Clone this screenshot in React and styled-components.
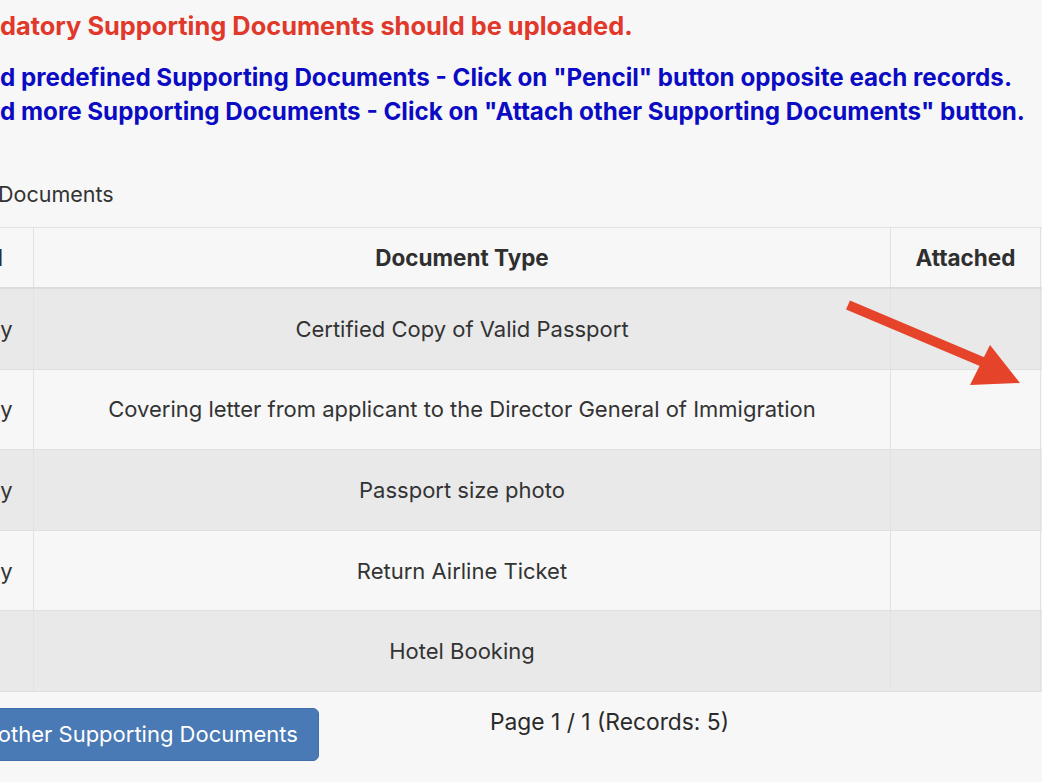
import React from "react";
import styled, { createGlobalStyle } from "styled-components";

const Global = createGlobalStyle`
  html, body {
    margin: 0;
    padding: 0;
    background: #f7f7f7;
    overflow: hidden;
  }
  body {
    font-family: Inter, "Open Sans", "Liberation Sans", sans-serif;
    color: #333;
  }
`;

const Page = styled.div`
  position: relative;
  width: 1042px;
  height: 782px;
  overflow: hidden;
`;

const Notes = styled.div`
  padding-top: 11px;
  display: flex;
  flex-direction: column;
`;

const Warning = styled.div`
  color: #e0392b;
  font-weight: 700;
  font-size: 25.4px;
  line-height: 30px;
  white-space: nowrap;
`;

const Steps = styled.div`
  margin-top: 20px;
  display: flex;
  flex-direction: column;
`;

const Step = styled.div`
  color: #0b0bc4;
  font-weight: 700;
  font-size: 24.2px;
  line-height: 34px;
  white-space: nowrap;
`;

const SectionTitle = styled.div`
  margin-top: 52px;
  margin-left: -2px;
  font-size: 21.5px;
  line-height: 26px;
  color: #333;
  white-space: nowrap;
`;

const TableWrap = styled.div`
  margin-top: 20px;
  margin-left: -121px;
`;

const Table = styled.table`
  border-collapse: collapse;
  table-layout: fixed;
  width: 1311px;
`;

const Col = styled.col`
  width: ${(p) => p.$w}px;
`;

const HeadCell = styled.th`
  height: 59px;
  padding: 0;
  font-size: 22.5px;
  font-weight: 700;
  color: #2f2f2f;
  text-align: center;
  white-space: nowrap;
  border: 1px solid #e2e2e2;
  border-bottom: 2px solid #dcdcdc;
  background: #f7f7f7;
`;

const Row = styled.tr`
  background: ${(p) => (p.$odd ? "#e9e9e9" : "#f7f7f7")};
`;

const Cell = styled.td`
  height: 79.6px;
  padding: 0;
  font-size: 22px;
  color: #333;
  text-align: center;
  white-space: nowrap;
  border-left: 1px solid #e2e2e2;
  border-right: 1px solid #e2e2e2;
  border-bottom: 1px solid #e0e0e0;
`;

const Footer = styled.div`
  margin-top: 16px;
  display: flex;
  align-items: flex-start;
`;

const AttachButton = styled.button`
  margin-left: -97px;
  height: 53px;
  padding: 0 20px 0 21px;
  background: #4a7ab5;
  color: #fff;
  border: 1px solid #3f6ea8;
  border-radius: 6px;
  font-family: Inter, "Open Sans", "Liberation Sans", sans-serif;
  font-size: 22px;
  white-space: nowrap;
`;

const Pager = styled.div`
  margin-left: 171px;
  margin-top: 1px;
  font-size: 22.8px;
  line-height: 26px;
  color: #2a2a2a;
  white-space: nowrap;
`;

const ArrowSvg = styled.svg`
  position: absolute;
  left: 840px;
  top: 295px;
  width: 190px;
  height: 100px;
`;

const rows = [
  { req: "Mandatory", doc: "Certified Copy of Valid Passport" },
  { req: "Mandatory", doc: "Covering letter from applicant to the Director General of Immigration" },
  { req: "Mandatory", doc: "Passport size photo" },
  { req: "Mandatory", doc: "Return Airline Ticket" },
  { req: "Optional", doc: "Hotel Booking" },
];

export default function App() {
  return (
    <Page>
      <Global />
      <Notes>
        <Warning>datory Supporting Documents should be uploaded.</Warning>
        <Steps>
          <Step>d predefined Supporting Documents - Click on "Pencil" button opposite each records.</Step>
          <Step>d more Supporting Documents - Click on "Attach other Supporting Documents" button.</Step>
        </Steps>
      </Notes>
      <SectionTitle>Documents</SectionTitle>
      <TableWrap>
        <Table>
          <colgroup>
            <Col $w={154} />
            <Col $w={857} />
            <Col $w={150} />
            <Col $w={150} />
          </colgroup>
          <thead>
            <tr>
              <HeadCell>Optional</HeadCell>
              <HeadCell>Document Type</HeadCell>
              <HeadCell>Attached</HeadCell>
              <HeadCell>Action</HeadCell>
            </tr>
          </thead>
          <tbody>
            {rows.map((r, i) => (
              <Row key={i} $odd={i % 2 === 0}>
                <Cell>{r.req}</Cell>
                <Cell>{r.doc}</Cell>
                <Cell />
                <Cell />
              </Row>
            ))}
          </tbody>
        </Table>
      </TableWrap>
      <Footer>
        <AttachButton>Attach other Supporting Documents</AttachButton>
        <Pager>Page 1 / 1 (Records: 5)</Pager>
      </Footer>
      <ArrowSvg viewBox="0 0 190 100">
        <line x1="8" y1="10" x2="150" y2="70" stroke="#e5432a" strokeWidth="10" strokeLinecap="butt" />
        <polygon points="150,50 180,88 130,90" fill="#e5432a" />
      </ArrowSvg>
    </Page>
  );
}
